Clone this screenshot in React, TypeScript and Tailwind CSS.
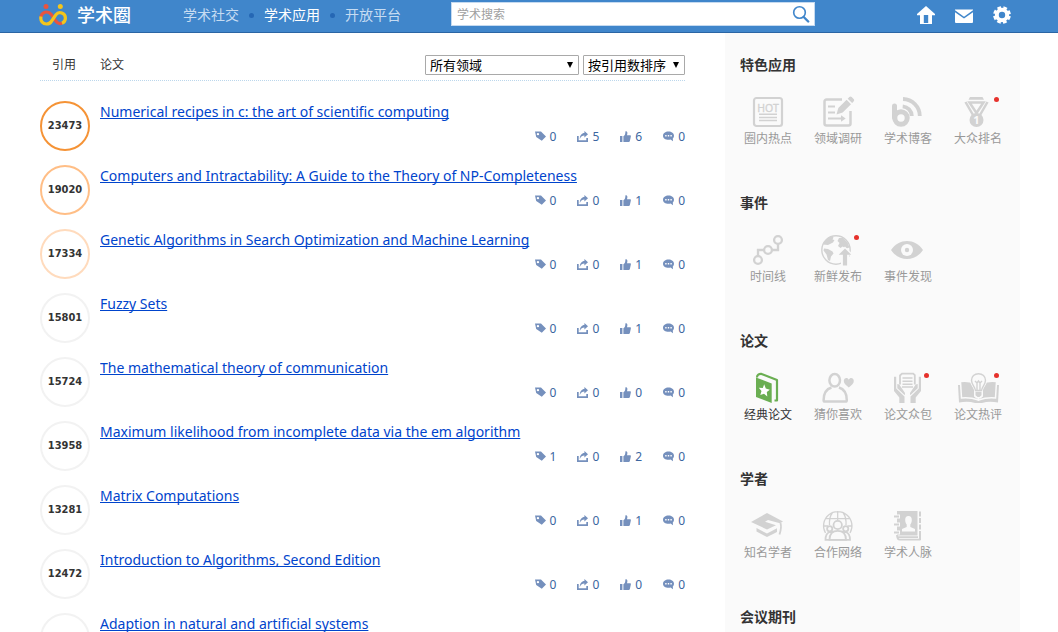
import React from 'react';

interface Paper {
  cites: number;
  title: string;
  ring: string;
  stats: [number, number, number, number];
}

interface AppItem {
  label: string;
  icon: React.ReactNode;
  isNew?: boolean;
  active?: boolean;
}

const papers: Paper[] = [
  { cites: 23473, title: 'Numerical recipes in c: the art of scientific computing', ring: 'border-[#f59336]', stats: [0, 5, 6, 0] },
  { cites: 19020, title: 'Computers and Intractability: A Guide to the Theory of NP-Completeness', ring: 'border-[#ffbe86]', stats: [0, 0, 1, 0] },
  { cites: 17334, title: 'Genetic Algorithms in Search Optimization and Machine Learning', ring: 'border-[#ffdbbd]', stats: [0, 0, 1, 0] },
  { cites: 15801, title: 'Fuzzy Sets', ring: 'border-[#f2f2f2]', stats: [0, 0, 1, 0] },
  { cites: 15724, title: 'The mathematical theory of communication', ring: 'border-[#f2f2f2]', stats: [0, 0, 0, 0] },
  { cites: 13958, title: 'Maximum likelihood from incomplete data via the em algorithm', ring: 'border-[#f2f2f2]', stats: [1, 0, 2, 0] },
  { cites: 13281, title: 'Matrix Computations', ring: 'border-[#f2f2f2]', stats: [0, 0, 1, 0] },
  { cites: 12472, title: 'Introduction to Algorithms, Second Edition', ring: 'border-[#f2f2f2]', stats: [0, 0, 0, 0] },
  { cites: 12086, title: 'Adaption in natural and artificial systems', ring: 'border-[#f2f2f2]', stats: [0, 0, 0, 0] },
];

/* Small icons under each paper */
const statIcons = [
  {
    name: '标签',
    icon: <path fillRule="evenodd" d="M0 .5h6L11 5.500 6.800 9.700 1.200 6zM2.900 1.900a1.200 1.200 0 1 0 .1 2.400 1.200 1.200 0 0 0-.1-2.400z" />,
  },
  {
    name: '分享',
    icon: (
      <>
        <path d="M0 5h1.700v4.200h7.600V7H11v4H0z" />
        <path d="M2.800 8C2.800 4.400 4.800 2 7.400 2V0L11 3.200 7.400 6.400V4.600C5.400 4.600 4 5.600 2.800 8z" />
      </>
    ),
  },
  {
    name: '赞',
    icon: <path d="M0 5h2.400v6H0zM3.400 5.200C5 4.400 5.400 3 5.400.6 5.600-.2 7.400.2 7.400 1.800c0 1-.2 1.600-.4 2.400h3.200c.8 0 .8 1 .6 1.600l-1 4.400c-.2.6-.6.8-1 .8H3.400z" />,
  },
  {
    name: '评论',
    icon: (
      <>
        <path d="M5.500.5C8.600.5 11 2.200 11 4.700c0 1.200-.5 2-1.200 2.700l.2 2.800-2.400-1.600c-.7.2-1.400.2-2.100.2C2.400 8.800 0 7.200 0 4.700S2.400.5 5.500.5z" />
        <path fill="#fff" d="M2.200 4h1.400v1.400H2.200zM4.800 4h1.400v1.400H4.800zM7.400 4h1.400v1.400H7.400z" />
      </>
    ),
  },
];

const HotIcon = (
  <>
    <rect x="2" y="2" width="28" height="28" rx="2.500" fill="none" stroke="currentColor" strokeWidth="2.200" />
    <text x="16" y="15.500" fontSize="10.500" textAnchor="middle" fill="currentColor" stroke="currentColor" strokeWidth=".3">HOT</text>
    <path d="M7 18.200h18M7 21.400h18M7 24.600h18" stroke="currentColor" strokeWidth="1.500" />
  </>
);

const SurveyIcon = (
  <>
    <path d="M20 3.500H4.500a2 2 0 0 0-2 2v22a2 2 0 0 0 2 2H26.500a2 2 0 0 0 2-2V15" fill="none" stroke="currentColor" strokeWidth="2.500" />
    <path d="M6 10.500h7M6 16.500h7M6 22.500h14" stroke="currentColor" strokeWidth="1.800" />
    <path d="M19 19.300l4.700 3.200-4.700 3.200zM14.500 18.500l1.800-6.400L24.600 3.800l4.400 4.400-8.300 8.300zM25.700 2.700L27.300 1.100c.8-.8 1.600-.8 2.400 0l1.900 1.900c.8.8.8 1.600 0 2.400L30.100 7z" fill="currentColor" />
  </>
);

const BlogIcon = (
  <>
    <path d="M2.500 10V21.500" stroke="currentColor" strokeWidth="5" strokeLinecap="round" />
    <circle cx="9" cy="22" r="6.200" fill="none" stroke="currentColor" strokeWidth="5" />
    <path d="M10.700 10.300A10 10 0 0 1 19.800 20M11 3A17 17 0 0 1 27.800 20" fill="none" stroke="currentColor" strokeWidth="3.800" />
  </>
);

const MedalIcon = (
  <>
    <path d="M8 1h12.500l1.500 2.800H6.500z" fill="currentColor" />
    <path d="M3.500 6L11 19M25.500 6L18 19M7.500 6.500l7 10.500 7-10.500z" fill="none" stroke="currentColor" strokeWidth="2.500" />
    <circle cx="14.500" cy="24" r="7" fill="currentColor" />
    <text x="14.500" y="28" fontSize="11" fontWeight="bold" textAnchor="middle" fill="#fafafa">1</text>
  </>
);

const TimelineIcon = (
  <g fill="none" stroke="currentColor" strokeWidth="2.300">
    <circle cx="6" cy="26" r="3.900" />
    <circle cx="16" cy="16" r="3.900" />
    <circle cx="26" cy="6" r="3.900" />
    <path d="M6 22v-6h6M20 16h6v-6" />
  </g>
);

const GlobeIcon = (
  <>
    <circle cx="14" cy="16" r="14.200" fill="none" stroke="currentColor" strokeWidth="1.400" />
    <path d="M1 10.500C3 5.500 6 3 10 2l1.500 1.500-1 2 2 .5-1.500 2.500-3 1.500L6 11zM2 14.500l4 .5 4.500 2.500 1 2-2.500 3-1 4.500-2-1-1.500-5.500-3-4zM17 4l4 0 4.500 4.500 2 5-3 1-4-2-2 1.500-2.500-2 1.500-3-2-2z" fill="currentColor" />
    <path d="M23 12.500l9 9h-5V32.500h-8V21.500h-5z" fill="#fafafa" />
    <path d="M23 14.500l6.300 6.200h-4.200V31.500h-4.200V20.700h-4.200z" fill="currentColor" />
  </>
);

const EyeIcon = (
  <>
    <path d="M-1 16C3 10 9 7 15 7s12 3 16 9c-4 6-10 9-16 9S3 22-1 16z" fill="currentColor" />
    <circle cx="15" cy="16" r="6" fill="#fafafa" />
    <circle cx="15" cy="16" r="2.200" fill="currentColor" />
  </>
);

const ClassicIcon = (
  <>
    <path d="M4 5.500l15.700 6V31L4 25z" fill="currentColor" />
    <path d="M5 5.500C5 3 7 1.600 9.500 1.900L25 8v20.500h-2.500" fill="none" stroke="currentColor" strokeWidth="2.200" strokeLinejoin="round" />
    <path d="M12.200 12.200l1.600 4.200 4 1.400-3 2.300.5 4.300-3.300-2.600-3.700 1.200 1.200-4-2.700-3.300 4 .3z" fill="#fff" />
  </>
);

const LikeIcon = (
  <>
    <ellipse cx="12.700" cy="8.300" rx="5.300" ry="6.300" fill="none" stroke="currentColor" strokeWidth="2.500" />
    <path d="M9.500 15.500C4.500 17 1.600 21.500 1.600 28.200c0 .9.500 1.300 1.300 1.300H23.500c.8 0 1.300-.4 1.300-1.300 0-6.700-2.900-11.200-7.900-12.700" fill="none" stroke="currentColor" strokeWidth="2.500" />
    <path d="M26.800 15.500c-3-2.300-5-4-5-6.500 0-3.200 3.800-4 5-1.300 1.200-2.700 5-1.900 5 1.300 0 2.500-2 4.200-5 6.500z" fill="currentColor" />
  </>
);

const CrowdIcon = (
  <>
    <path d="M8 12.500V3.500L10 1.600h11.200l1.600 1.600v9.300" fill="none" stroke="currentColor" strokeWidth="1.800" />
    <path d="M10.500 6h10M10.500 9.200h10M10 15h11M10.500 12.200h10" stroke="currentColor" strokeWidth="1.400" />
    <path d="M2 4.700h2.200V16.500l8.300 8V31H7.300v-5.500L2 19zM29 4.700h-2.200V16.500l-8.300 8V31h5.200v-5.500L29 19z" fill="currentColor" />
    <path d="M5.300 12l2 .5 5.700 8.500-.2 2.300-7.500-7zM25.700 12l-2 .5-5.700 8.500.2 2.300 7.500-7z" fill="currentColor" />
  </>
);

const CommentBookIcon = (
  <>
    <path d="M-4 13H37l-1 17.500c-6-1-11-1-16 .5h-7c-5-1.500-10-1.500-16-.5z" fill="currentColor" />
    <g fill="currentColor" stroke="#fafafa" strokeWidth="1.500">
      <path d="M-1.500 9.500C4 8.800 10 9.300 16.500 12v16C10 25.800 4 25.500-.500 26z" />
      <path d="M34.500 9.500C29 8.800 23 9.300 16.500 12v16C23 25.800 29 25.500 33.500 26z" />
    </g>
    <path d="M16.500 0c5 0 8.500 3.500 8.500 8.300 0 4-2.800 6.200-4 9.700v6.500l-2.500 2h-4L12 24.500V18c-1.200-3.500-4-5.700-4-9.700C8 3.500 11.500 0 16.500 0z" fill="#fafafa" />
    <path d="M13.500 18.500c-.5-4-4-6-4-10.200 0-3.800 3-6.600 7-6.600s7 2.800 7 6.600c0 4.200-3.500 6.200-4 10.200zM13 9l2 2 1.500-2 1.500 2 2-2M15 11v7M18 11v7" fill="none" stroke="currentColor" strokeWidth="1.400" />
    <path d="M13.500 19.700h6v3.500l-2 1.700h-2l-2-1.700z" fill="currentColor" />
  </>
);

const ScholarIcon = (
  <>
    <path d="M-1 12L15 3l16 8.500-3 1.700-12-3.200-3 1.700 11 3.500-9 4.300z" fill="currentColor" />
    <path d="M4.500 18L15 23.500l10-5.200v3.700L15 27 4.500 21.500z" fill="currentColor" />
    <path d="M28.500 13c.9 3 .5 7-1 11.500" fill="none" stroke="currentColor" strokeWidth="1.800" />
  </>
);

const NetworkIcon = (
  <>
    <g fill="none" stroke="currentColor" strokeWidth="1.300">
      <path d="M3.500 23A14.200 14.200 0 1 1 28 23M15.700 1v9M10.500 2.500C8 6 7.200 11 7.500 15M21 2.500c2.500 3.500 3.300 8.500 3 12.500M3 8.700h25.500M1.500 16H6M25.500 16H30" />
    </g>
    <g fill="#fafafa" stroke="currentColor" strokeWidth="1.800">
      <path d="M3.500 29.800c0-4 1.500-7 4.500-7.800h15.500c3 .8 4.500 3.800 4.500 7.800z" />
      <circle cx="7.700" cy="18.700" r="2.600" />
      <circle cx="23.700" cy="18.700" r="2.600" />
      <path d="M7.500 29.900c0-5.500 2.500-9 8.200-9s8.300 3.500 8.300 9z" />
      <circle cx="15.700" cy="15" r="4.200" />
    </g>
  </>
);

const ContactIcon = (
  <>
    <path d="M5 1h20.500v24.500H5z" fill="currentColor" />
    <path d="M27 1.500h2v5h-2zM27 8h2v5h-2zM27 14.500h2v5h-2zM27 21h2v9h-2z" fill="currentColor" />
    <path d="M5 25c0 3 .8 4.600 3 4.600h20.500M6 27.200h20" fill="none" stroke="currentColor" strokeWidth="1.800" />
    <path d="M4 6.500h4M4 14.500h4M4 22.500h4" stroke="#fafafa" strokeWidth="4" />
    <path d="M2 6.500h5M2 14.500h5M2 22.500h5" stroke="currentColor" strokeWidth="1.800" />
    <path d="M16.500 6c2.300 0 3.300 1.600 3.300 4 0 2-.8 3.500-1.500 4.500V17l4.700 2v2.500H10V19l4.700-2v-2.500c-.7-1-1.500-2.500-1.500-4.500 0-2.400 1-4 3.300-4z" fill="#fafafa" />
  </>
);

const sections: { title: string; items: AppItem[] }[] = [
  {
    title: '特色应用',
    items: [
      { label: '圈内热点', icon: HotIcon },
      { label: '领域调研', icon: SurveyIcon },
      { label: '学术博客', icon: BlogIcon },
      { label: '大众排名', icon: MedalIcon, isNew: true },
    ],
  },
  {
    title: '事件',
    items: [
      { label: '时间线', icon: TimelineIcon },
      { label: '新鲜发布', icon: GlobeIcon, isNew: true },
      { label: '事件发现', icon: EyeIcon },
    ],
  },
  {
    title: '论文',
    items: [
      { label: '经典论文', icon: ClassicIcon, active: true },
      { label: '猜你喜欢', icon: LikeIcon },
      { label: '论文众包', icon: CrowdIcon, isNew: true },
      { label: '论文热评', icon: CommentBookIcon, isNew: true },
    ],
  },
  {
    title: '学者',
    items: [
      { label: '知名学者', icon: ScholarIcon },
      { label: '合作网络', icon: NetworkIcon },
      { label: '学术人脉', icon: ContactIcon },
    ],
  },
  { title: '会议期刊', items: [] },
];

const Logo = () => (
  <svg viewBox="0 0 28 22" className="h-[22px] w-7" fill="none" strokeWidth="3.200" aria-hidden="true">
    <path d="M2 13C2.500 8.500 8.500 6 12 10.200L17 17.300c1.500 2 4 2.600 6 1.700" stroke="#e8543f" />
    <path d="M2 12.500C1 17 4 20 7.500 20c2.300 0 3.800-1 4.800-2.500L17 10.700C20 6.500 26.400 9 26.400 14c0 2.500-1.300 4.500-3.400 5.300" stroke="#f3c51c" />
    <circle cx="7" cy="2.500" r="2.500" fill="#e8543f" />
    <circle cx="21.300" cy="2.500" r="2.500" fill="#f3c51c" />
  </svg>
);

const Header = () => (
  <header className="border-b border-[#2a65a4] bg-[#4086cb]">
    <div className="mx-auto flex h-8 max-w-[1060px] items-center pr-[47px] pb-0.5 pl-[39px]">
      <a href="#" className="flex shrink-0 items-center gap-2.5 text-lg leading-[30px] font-medium text-white">
        <Logo />
        学术圈
      </a>
      <nav className="ml-[52px] flex shrink-0 items-center gap-2.5 text-sm leading-7 text-[#c6dcf2]">
        <a href="#">学术社交</a>
        <i className="size-[5px] rounded-full bg-[#2567b4]" />
        <a href="#" className="text-white">学术应用</a>
        <i className="size-[5px] rounded-full bg-[#2567b4]" />
        <a href="#">开放平台</a>
      </nav>
      <form className="mb-0.5 ml-[50px] flex h-6 w-[364px] items-center border border-[#c5daf0] bg-white" onSubmit={e => e.preventDefault()}>
        <input
          type="text"
          aria-label="学术搜索"
          placeholder="学术搜索"
          className="min-w-0 flex-1 px-[5px] pt-0.5 text-xs text-gray-700 outline-none placeholder:text-[#a0a0a0]"
        />
        <button type="submit" aria-label="搜索" className="px-1 text-[#4086cb]">
          <svg viewBox="0 0 18 18" className="size-[18px]" fill="none" stroke="currentColor">
            <circle cx="7.500" cy="7.500" r="5.800" strokeWidth="1.600" />
            <path d="M11.700 12l4.500 4.500" strokeWidth="2.400" strokeLinecap="round" />
          </svg>
        </button>
      </form>
      <div className="ml-auto flex shrink-0 items-center gap-5 text-white">
        <a href="#" aria-label="首页">
          <svg viewBox="0 0 18 20" className="h-5 w-[18px]" fill="currentColor">
            <path fillRule="evenodd" d="M9 1l9 8v1.200h-3V19H3v-8.800H0V9zM6.800 10v8h4.400v-8z" />
          </svg>
        </a>
        <a href="#" aria-label="消息">
          <svg viewBox="0 0 18 20" className="h-5 w-[18px]" fill="currentColor">
            <path d="M0 4.500h18v.8l-9 6.400L0 5.300zM0 7.300l9 6.200 9-6.200V17a1 1 0 0 1-1 1H1a1 1 0 0 1-1-1z" />
          </svg>
        </a>
        <a href="#" aria-label="设置">
          <svg viewBox="0 0 18 20" className="h-5 w-[18px]" fill="none" stroke="currentColor">
            <circle cx="9" cy="10" r="5.200" strokeWidth="4" />
            <circle cx="9" cy="10" r="7.400" strokeWidth="3" strokeDasharray="3.600 2.212" strokeDashoffset="4.700" />
          </svg>
        </a>
      </div>
    </div>
  </header>
);

const SelectBox: React.FC<{ label: string; options: string[]; className: string }> = ({ label, options, className }) => (
  <div className={`relative ${className}`}>
    <select
      aria-label={label}
      className="block h-5 w-full appearance-none rounded-[1px] border border-[#a9a9a9] bg-white px-1 text-[13px] leading-[18px] text-black"
    >
      {options.map(o => <option key={o}>{o}</option>)}
    </select>
    <svg viewBox="0 0 6 6" className="pointer-events-none absolute top-[7px] right-1.5 size-1.5">
      <path d="M0 0h6L3 6z" />
    </svg>
  </div>
);

const PaperRow: React.FC<{ paper: Paper }> = ({ paper }) => (
  <li className="flex gap-2.5">
    <div
      className={`flex size-[50px] shrink-0 items-center justify-center rounded-full border-2 font-['DejaVu_Sans_Condensed','DejaVu_Sans',sans-serif] text-[11px] font-bold text-[#333] ${paper.ring}`}
    >
      {paper.cites}
    </div>
    <div className="min-w-0 flex-1">
      <a href="#" className="block truncate text-sm leading-[22px] text-[#0044cc] underline decoration-1 underline-offset-1 [text-decoration-skip-ink:none]">
        {paper.title}
      </a>
      <div className="flex justify-end gap-[21px] text-xs leading-7 text-[#3b66a0]">
        {statIcons.map((s, i) => (
          <button key={s.name} type="button" aria-label={s.name} className="flex items-center gap-1">
            <svg viewBox="0 0 11 11" className="mb-0.5 size-[11px] text-[#7590bd]" fill="currentColor">{s.icon}</svg>
            {paper.stats[i]}
          </button>
        ))}
      </div>
    </div>
  </li>
);

const SideSection: React.FC<{ title: string; items: AppItem[] }> = ({ title, items }) => (
  <section className="h-[138px]">
    <h2 className="px-[15px] text-sm leading-5 font-bold text-[#333]">{title}</h2>
    <div className="mt-[21px] grid grid-cols-4 pr-[7px] pl-2">
      {items.map(item => (
        <a
          key={item.label}
          href="#"
          className={`flex flex-col items-center text-xs leading-[22px] ${item.active ? 'text-[#333]' : 'text-[#999]'}`}
        >
          <span className={`relative ${item.active ? 'text-[#6aae52]' : 'text-[#d2d2d2]'}`}>
            <svg viewBox="0 0 32 32" className="block size-8 overflow-visible">{item.icon}</svg>
            {item.isNew && <i className="absolute top-px -right-[5px] size-[5px] rounded-full bg-[#e6322c]" />}
          </span>
          {item.label}
        </a>
      ))}
    </div>
  </section>
);

const App = () => {
  return (
    <div className="min-h-screen bg-white font-['Noto_Sans','Noto_Sans_CJK_SC',sans-serif] text-[#333]">
      <Header />
      <div className="mx-auto flex max-w-[1060px] pr-[38px] pl-10">
        <main className="mr-10 min-w-0 flex-1 pt-[22px]">
          {/* Column titles and filters */}
          <div className="flex items-center border-b border-dotted border-[#bcd7ec] pb-[5px] text-xs leading-5">
            <span className="w-[60px] pl-3">引用</span>
            <span>论文</span>
            <div className="ml-auto flex gap-1">
              <SelectBox label="领域" className="w-[154px]" options={['所有领域', '计算机科学', '数学', '物理学']} />
              <SelectBox label="排序" className="w-[102px]" options={['按引用数排序', '按时间排序']} />
            </div>
          </div>

          <ul className="flex flex-col gap-3.5 py-5">
            {papers.map(p => (
              <PaperRow key={p.cites} paper={p} />
            ))}
          </ul>
        </main>

        <aside className="w-[295px] shrink-0 bg-[#fafafa] pt-[22px]">
          {sections.map(s => (
            <SideSection key={s.title} title={s.title} items={s.items} />
          ))}
        </aside>
      </div>
    </div>
  );
};

export default App;
